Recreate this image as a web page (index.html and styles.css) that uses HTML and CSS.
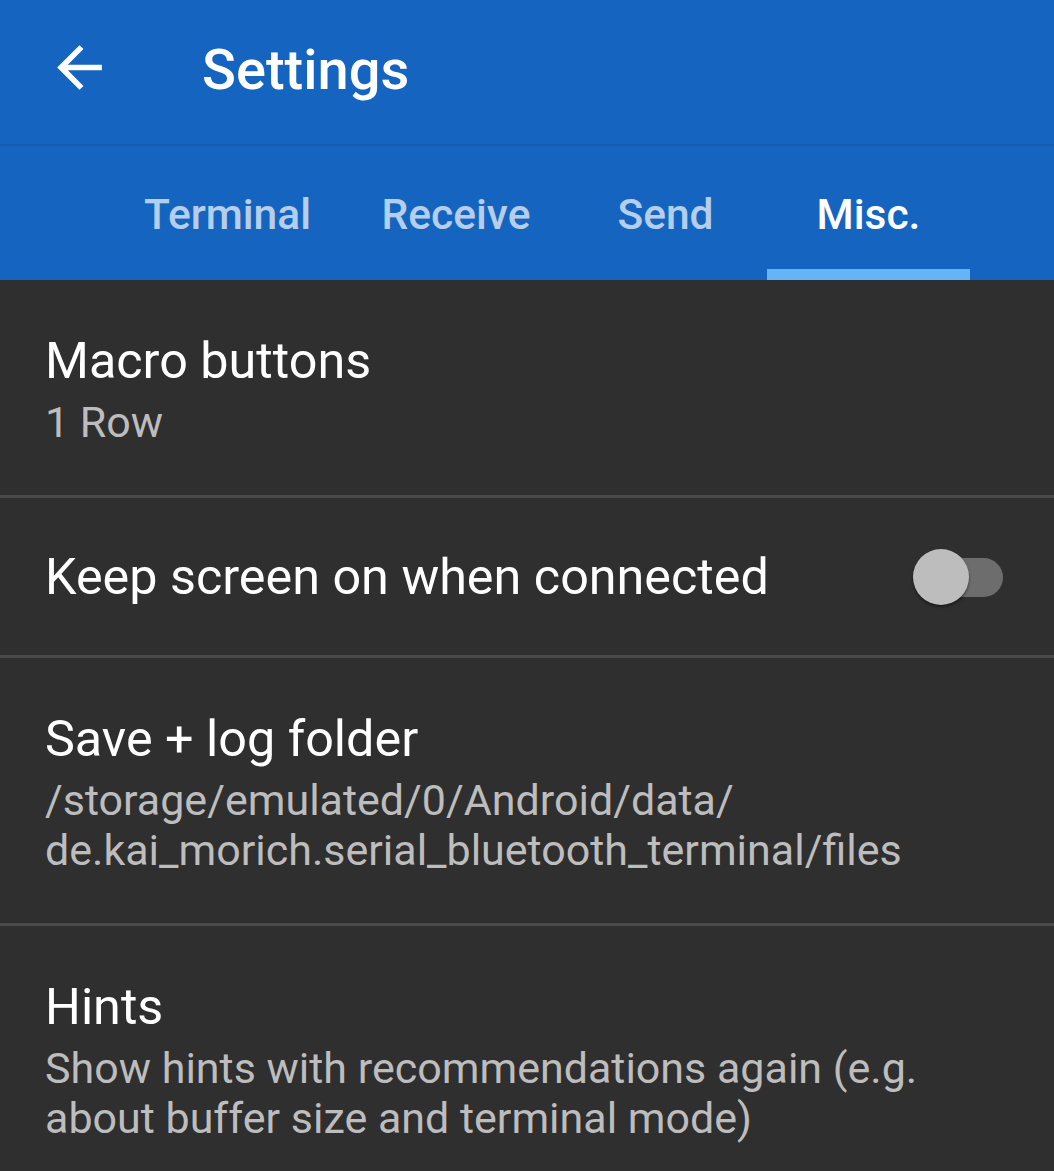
FILE: index.html
```html
<!DOCTYPE html>
<html>
<head>
<meta charset="utf-8">
<link rel="stylesheet" href="styles.css">
</head>
<body>
<div class="appbar">
  <div class="toolbar">
    <svg class="back" viewBox="0 0 24 24"><path d="M20 11H7.83l5.59-5.59L12 4l-8 8 8 8 1.41-1.41L7.83 13H20v-2z" fill="#fff"/></svg>
    <div class="title">Settings</div>
  </div>
  <div class="sep"></div>
  <div class="tabs">
    <div class="tab t1">Terminal</div>
    <div class="tab t2">Receive</div>
    <div class="tab t3">Send</div>
    <div class="tab t4 active">Misc.</div>
  </div>
</div>
<div class="list">
  <div class="pref">
    <div class="pt">Macro buttons</div>
    <div class="ps">1 Row</div>
  </div>
  <div class="div"></div>
  <div class="pref single">
    <div class="pt">Keep screen on when connected</div>
    <div class="switch"><div class="track"></div><div class="thumb"></div></div>
  </div>
  <div class="div"></div>
  <div class="pref">
    <div class="pt">Save + log folder</div>
    <div class="ps">/storage/emulated/0/Android/data/<br>de.kai_morich.serial_bluetooth_terminal/files</div>
  </div>
  <div class="div"></div>
  <div class="pref">
    <div class="pt">Hints</div>
    <div class="ps">Show hints with recommendations again (e.g.<br>about buffer size and terminal mode)</div>
  </div>
</div>
</body>
</html>
```
FILE: styles.css
```css
html, body {
  margin: 0;
  padding: 0;
}
body {
  width: 1054px;
  height: 1171px;
  overflow: hidden;
  background: #2f2f2f;
  font-family: Roboto, "Noto Sans", sans-serif;
}
.appbar {
  background: #1565c0;
}
.toolbar {
  height: 144px;
  box-sizing: border-box;
  padding: 0 0 9px 46px;
  display: flex;
  align-items: center;
}
.back {
  width: 67px;
  height: 67px;
  flex: none;
}
.title {
  margin-left: 89px;
  color: #fff;
  font-size: 56px;
  font-weight: 500;
  line-height: 66px;
  position: relative;
  top: 2px;
}
.sep {
  height: 2px;
  background: #135cb1;
}
.tabs {
  height: 134px;
  display: flex;
  padding-left: 113px;
}
.tab {
  position: relative;
  box-sizing: border-box;
  padding-top: 42px;
  text-align: center;
  font-size: 42.5px;
  line-height: 53px;
  font-weight: 500;
  color: rgba(255, 255, 255, 0.7);
}
.t1 { width: 229px; }
.t2 { width: 228px; }
.t3 { width: 197px; padding-right: 6px; }
.t4 { width: 203px; }
.tab.active {
  color: #fff;
}
.tab.active::after {
  content: "";
  position: absolute;
  left: 0;
  right: 0;
  bottom: 0;
  height: 11px;
  background: #64b5f6;
}
.pref {
  padding: 52px 45px 48px 45px;
}
.pref.single {
  padding-top: 50px;
  padding-bottom: 49px;
  padding-right: 43px;
  display: flex;
  align-items: center;
  justify-content: space-between;
}
.pt {
  color: #fff;
  font-size: 50.3px;
  line-height: 58px;
}
.ps {
  margin-top: 7px;
  color: #bdbdbd;
  font-size: 43px;
  line-height: 50px;
}
.div {
  height: 3px;
  background: #4a4a4a;
}
.switch {
  position: relative;
  width: 95px;
  height: 58px;
  margin-right: 8px;
}
.track {
  position: absolute;
  left: 14px;
  top: 9.5px;
  width: 81px;
  height: 39px;
  border-radius: 20px;
  background: #6d6d6d;
}
.thumb {
  position: absolute;
  left: 5px;
  top: 1px;
  width: 56px;
  height: 56px;
  border-radius: 50%;
  background: #bdbdbd;
  box-shadow: 0 2px 3px rgba(0, 0, 0, 0.45);
}
```
